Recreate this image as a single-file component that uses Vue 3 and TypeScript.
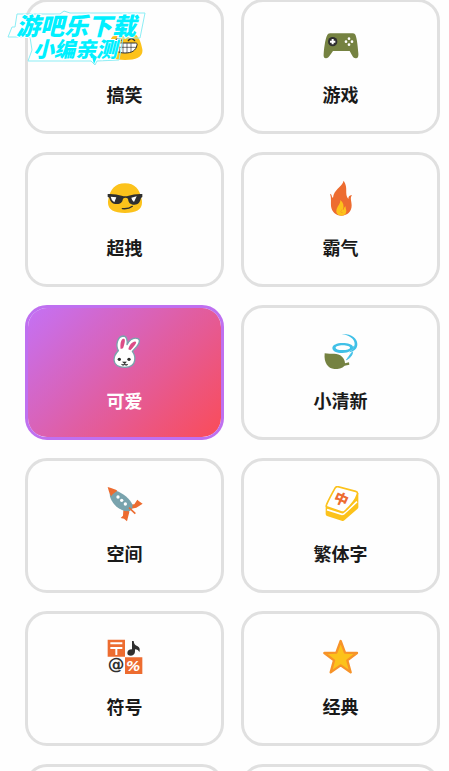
<script setup lang="ts">
import { ref } from 'vue'

interface Category {
  icon: string
  label: string
  viewBox: string
}

const categories: Category[] = [
  { icon: 'laugh', label: '搞笑', viewBox: '319 81 108 108' },
  { icon: 'gamepad', label: '游戏', viewBox: '38 21 108 108' },
  { icon: 'cool', label: '超拽', viewBox: '34 15 108 108' },
  { icon: 'fire', label: '霸气', viewBox: '38 15 108 108' },
  { icon: 'rabbit', label: '可爱', viewBox: '34 24 108 108' },
  { icon: 'leaf', label: '小清新', viewBox: '38 24 108 108' },
  { icon: 'rocket', label: '空间', viewBox: '34 24 108 108' },
  { icon: 'mahjong', label: '繁体字', viewBox: '38 24 108 108' },
  { icon: 'symbols', label: '符号', viewBox: '34 27 108 108' },
  { icon: 'star', label: '经典', viewBox: '38 27 108 108' },
]

const selected = ref('可爱')
</script>

<template>
  <main class="page">
    <div class="grid">
      <button
        v-for="c in categories"
        :key="c.label"
        type="button"
        class="card"
        :class="{ active: selected === c.label }"
        :aria-pressed="selected === c.label"
        @click="selected = c.label"
      >
        <svg class="icon" :viewBox="c.viewBox" aria-hidden="true">
          <g v-if="c.icon === 'laugh'">
            <path d="M373 93c32 0 45 20 51 50 7 25-13 37-51 37s-58-12-51-37c6-30 19-50 51-50z" fill="#fcc21b" />
            <path d="M343 129h61c5 0 6 2 5 6-3 17-16 24-36 24s-32-7-35-24c-1-4 1-6 5-6z" fill="#fff" stroke="#2f2f2f" stroke-width="3" />
            <path d="M340 142h67M356 130v27M367 130v29M379 130v29M391 130v27" fill="none" stroke="#2f2f2f" stroke-width="2" />
            <path d="M345 122q9-13 19 0M383 122q9-13 19 0" fill="none" stroke="#2f2f2f" stroke-width="4" stroke-linecap="round" />
          </g>
          <g v-else-if="c.icon === 'gamepad'">
            <path d="M53 42q2-2 7-2h67q5 0 7 3c5 7 8 30 10 57 1 11-2 15-8 15-5 0-8-4-11-9l-7-13H68l-9 13c-4 6-7 9-12 9-6 0-8-5-7-14 2-24 6-51 13-59z" fill="#758241" />
            <circle cx="67" cy="65" r="14" fill="#2f2f2f" />
            <path d="M67 57v16M59 65h16" stroke="#fff" stroke-width="6" />
            <g fill="#fff">
              <circle cx="116" cy="56" r="4" />
              <circle cx="116" cy="74" r="4" />
              <circle cx="107" cy="65" r="4" />
              <circle cx="125" cy="65" r="4" />
            </g>
          </g>
          <g v-else-if="c.icon === 'cool'">
            <path d="M88 25c30 0 44 18 50 48 6 28-13 41-50 41S32 101 38 73c6-30 20-48 50-48z" fill="#fcc21b" />
            <path d="M36 57q24-1 42 5 11 3 21 0 17-6 41-5v9l-4 3c-3 13-8 20-20 20-13 0-18-7-19-18q-8-5-15 0c-2 11-7 16-18 16-14 0-20-7-23-19l-5-3z" fill="#2f2f2f" />
            <path d="M45 65l17 2-6 15q-9-5-11-17zM107 68l16-4-8 17q-7-5-8-13z" fill="#fff" />
            <path d="M80 101q19 2 30-7" fill="none" stroke="#2f2f2f" stroke-width="4" stroke-linecap="round" />
          </g>
          <g v-else-if="c.icon === 'fire'">
            <path d="M100 17c-5 19-30 26-32 51-5 0-1-9-9-12 5 14 2 25 3 37 2 17 14 29 31 29 19 0 31-12 31-31 0-13-6-22 1-31-9 1-11 5-11 12-13-16 1-33-14-55z" fill="#ed6c30" />
            <path d="M90 75c1 13-12 20-12 34 0 8 7 13 16 13 8 0 14-5 14-13 0-7-3-9-2-15-6 2-4 9-8 11 4-13 1-23-8-30z" fill="#fcc21b" />
            <path d="M95 103q-1 4-4 6 1 5 6 4" fill="none" stroke="#f79329" stroke-width="2" />
          </g>
          <g v-else-if="c.icon === 'rabbit'">
            <path d="M68 77C59 61 65 34 83 33c10 0 13 13 11 26 9-17 21-22 33-18 9 4 2 17-4 24l-13 14c6 8 9 18 7 28-2 12-13 20-29 20-21 0-32-8-33-22 0-11 5-20 13-28z" fill="#fff" stroke="#79a3ad" stroke-width="4" stroke-linejoin="round" />
            <path d="M75 72c-2-13 0-31 9-31 8 0 1 20-2 29zM98 73c3-13 13-25 22-23 6 2-8 17-16 26z" fill="#dc4c86" />
            <circle cx="71" cy="103" r="5" fill="#2f2f2f" />
            <circle cx="100" cy="103" r="5" fill="#2f2f2f" />
            <path d="M81 111h11l-5 5zM87 115v4M77 118q4 5 10 1 6 4 10-1" fill="#2f2f2f" stroke="#2f2f2f" stroke-width="2" />
          </g>
          <g v-else-if="c.icon === 'leaf'">
            <path d="M94 27c28-2 47 13 47 30 0 14-9 22-25 25 10-7 17-15 17-25 0-16-17-26-39-30z" fill="#40c0e7" />
            <path fill-rule="evenodd" d="M97 54c16 0 28 4 31 11l5-4c-3 14-17 23-37 23-18 0-30-6-30-15s13-15 31-15zM97 61c-12 0-21 3-21 7s8 7 19 7c15 0 24-3 24-7s-9-7-22-7z" fill="#40c0e7" />
            <path d="M127 80q0 15-19 25 8-12 15-21z" fill="#40c0e7" stroke="#40c0e7" stroke-width="2" />
            <path d="M43 85c20 4 39-3 52 10 6 6 9 13 9 20l12-3 1 7-14 3c-8 8-19 10-31 10-19-1-32-18-29-47z" fill="#758241" />
          </g>
          <g v-else-if="c.icon === 'rocket'">
            <path d="M99 80l17-1 9-14 5 5 11 7-19 12-15 3zM83 97l-1 16-7 7 10 2 9 8 7-28-4-8z" fill="#ed6c30" />
            <path d="M42 45l19-7c22 8 42 24 50 43l-2 12-7 7-15-1C65 92 49 75 43 56z" fill="#79a3ad" />
            <path d="M36 27q22 6 29 11-14 9-19 17-6-10-10-28z" fill="#ed6c30" />
            <path d="M100 89l19 18" stroke="#ed6c30" stroke-width="5" />
            <g fill="#fff">
              <circle cx="67" cy="57" r="5" />
              <circle cx="78" cy="67" r="5" />
              <circle cx="89" cy="78" r="5" />
            </g>
          </g>
          <g v-else-if="c.icon === 'mahjong'">
            <path d="M46 84v24q0 4 4 6l44 14q5 2 9-2l38-33q4-3 3-8V44l-44 58z" fill="#fcc21b" />
            <path d="M50 95l45 14 5-1 40-37" fill="none" stroke="#fff" stroke-width="5" />
            <path d="M75 29q3-4 8-3l53 14q7 2 5 9-6 22-37 50-5 5-10 3L51 87q-5-2-2-8 9-20 26-50z" fill="#fff" stroke="#fcc21b" stroke-width="5" />
            <text class="tile" x="72" y="79" transform="rotate(25 93 63)" fill="#ed6c30">中</text>
          </g>
          <g v-else-if="c.icon === 'symbols'">
            <path d="M36 29h52v51H36zM88 82h52v50H88z" fill="#ed6c30" />
            <path d="M44 40h36M44 54h36M62 54v21" stroke="#fff" stroke-width="6" />
            <path d="M114 33q1 13 12 16 9 5 5 18-3-9-13-9v6q0 12-12 13-11 0-11-8 0-10 14-11V33z" fill="#2f2f2f" />
            <text class="at" x="36" y="120" fill="#2f2f2f">@</text>
            <text class="percent" x="92" y="123" fill="#fff">%</text>
          </g>
          <path v-else d="M91 33l13 35 36 1-29 22 10 36-30-21-30 21 10-36-29-22 36-1z" fill="#fcc21b" stroke="#f79329" stroke-width="7" stroke-linejoin="round" />
        </svg>
        <span class="label">{{ c.label }}</span>
      </button>
      <div v-for="n in 2" :key="n" class="card" aria-hidden="true"></div>
    </div>

    <svg class="stamp" viewBox="0 0 150 70" role="img" aria-label="游吧乐下载 小编亲测">
      <path class="stamp-frame" d="M17 14h43l4-3 6 2h75l-5 25h-17l-4 22-22 1-2 4-4-4H28l4-11-2-13H8l4-10h3z" />
      <text class="stamp-title" x="16" y="35">游吧乐下载</text>
      <text class="stamp-sub" x="33" y="57">小编亲测</text>
      <path class="stamp-tail" d="M91 53l3 11 3-7z" />
    </svg>
  </main>
</template>

<style>
body {
  margin: 0;
  background: #fefefe;
}
</style>

<style scoped>
.page {
  position: relative;
  height: 100vh;
  overflow: hidden;
  font-family: "Noto Sans CJK SC", sans-serif;
}

.grid {
  display: grid;
  grid-template-columns: 1fr 1fr;
  gap: 18px 17px;
  margin-top: -1px;
  padding: 0 9px 0 25px;
}

.card {
  box-sizing: border-box;
  display: flex;
  flex-direction: column;
  align-items: center;
  gap: 19px;
  min-height: 135px;
  padding: 25px 16px;
  border: 3px solid #e0e0e0;
  border-radius: 22px;
  background: #fefefe;
  color: #1a1a1a;
  font-family: inherit;
  cursor: pointer;
}

.card.active {
  border-color: #bf70f0;
  background: linear-gradient(135deg, #c471f5 0%, #fa4c58 100%) padding-box;
  color: #fff;
}

.icon {
  display: block;
  width: 36px;
  height: 36px;
}

.label {
  font-size: 18px;
  font-weight: 700;
  line-height: 24px;
}

.tile {
  font-size: 42px;
  font-weight: 900;
}

.at {
  font: bold 50px "DejaVu Sans", sans-serif;
}

.percent {
  font: italic bold 42px "DejaVu Sans", sans-serif;
}

.stamp {
  position: absolute;
  top: 0;
  left: 0;
  width: 150px;
  height: 70px;
  pointer-events: none;
}

.stamp-frame {
  fill: none;
  stroke: #8ceef5;
  stroke-width: 1;
}

.stamp-title,
.stamp-sub {
  fill: #00f0ff;
  stroke: #fff;
  stroke-width: 2;
  paint-order: stroke;
  font-style: italic;
  font-weight: 900;
}

.stamp-title {
  font-size: 24px;
}

.stamp-sub {
  font-size: 21px;
}

.stamp-tail {
  fill: #00f0ff;
}
</style>
